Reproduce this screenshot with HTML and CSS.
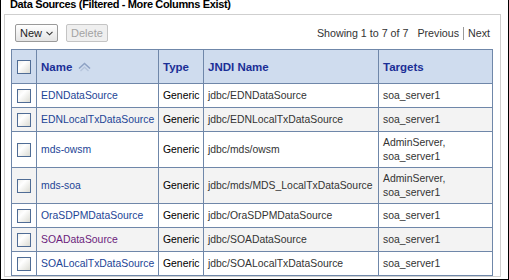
FILE: index.html
```html
<!DOCTYPE html>
<html lang="en"><head>
    <meta charset="UTF-8">
    <title>Data Sources</title>
    <link rel="stylesheet" href="styles.css">
</head>
<body>
    <div class="frame">
        <!-- Region title, scrolled slightly off the top -->
        <h2 class="title">Data Sources (Filtered - More Columns Exist)</h2>

        <div class="panel">
            <!-- Toolbar -->
            <div class="toolbar">
                <div class="actions">
                    <button class="btn">New <svg class="caret" width="7" height="5" viewBox="0 0 7 5"><polyline points="0.5,0.8 3.5,3.8 6.5,0.8" fill="none" stroke="#333" stroke-width="1.1"/></svg></button>
                    <button class="btn disabled">Delete</button>
                </div>
                <div class="pager">
                    <span>Showing 1 to 7 of 7</span>
                    <span class="prev">Previous</span>
                    <span class="sep"></span>
                    <span>Next</span>
                </div>
            </div>

            <!-- Data source table -->
            <table class="grid">
                <colgroup>
                    <col class="c-check"><col class="c-name"><col class="c-type"><col class="c-jndi"><col class="c-targets">
                </colgroup>
                <thead>
                    <tr>
                        <th class="check"><span class="box"></span></th>
                        <th>Name <svg class="sort" width="13" height="10" viewBox="0 0 13 10"><polyline points="1,6.5 6.5,1.5 12,6.5" fill="none" stroke="#8ea2c4" stroke-width="1.6"/><polyline points="2.5,9 6.5,5.3 10.5,9" fill="none" stroke="#b6c5dc" stroke-width="1.4"/></svg></th>
                        <th>Type</th>
                        <th>JNDI Name</th>
                        <th>Targets</th>
                    </tr>
                </thead>
                <tbody>
                    <tr>
                        <td class="check"><span class="box"></span></td>
                        <td><a href="#">EDNDataSource</a></td>
                        <td>Generic</td>
                        <td class="muted">jdbc/EDNDataSource</td>
                        <td class="muted">soa_server1</td>
                    </tr>
                    <tr class="alt">
                        <td class="check"><span class="box"></span></td>
                        <td><a href="#">EDNLocalTxDataSource</a></td>
                        <td>Generic</td>
                        <td class="muted">jdbc/EDNLocalTxDataSource</td>
                        <td class="muted">soa_server1</td>
                    </tr>
                    <tr class="tall">
                        <td class="check"><span class="box"></span></td>
                        <td><a href="#">mds-owsm</a></td>
                        <td>Generic</td>
                        <td class="muted">jdbc/mds/owsm</td>
                        <td class="muted">AdminServer,<br>soa_server1</td>
                    </tr>
                    <tr class="alt tall">
                        <td class="check"><span class="box"></span></td>
                        <td><a href="#">mds-soa</a></td>
                        <td>Generic</td>
                        <td class="muted">jdbc/mds/MDS_LocalTxDataSource</td>
                        <td class="muted">AdminServer,<br>soa_server1</td>
                    </tr>
                    <tr>
                        <td class="check"><span class="box"></span></td>
                        <td><a href="#">OraSDPMDataSource</a></td>
                        <td>Generic</td>
                        <td class="muted">jdbc/OraSDPMDataSource</td>
                        <td class="muted">soa_server1</td>
                    </tr>
                    <tr class="alt">
                        <td class="check"><span class="box"></span></td>
                        <td><a href="#" class="visited">SOADataSource</a></td>
                        <td>Generic</td>
                        <td class="muted">jdbc/SOADataSource</td>
                        <td class="muted">soa_server1</td>
                    </tr>
                    <tr>
                        <td class="check"><span class="box"></span></td>
                        <td><a href="#">SOALocalTxDataSource</a></td>
                        <td>Generic</td>
                        <td class="muted">jdbc/SOALocalTxDataSource</td>
                        <td class="muted">soa_server1</td>
                    </tr>
                </tbody>
            </table>
        </div>
    </div>
</body></html>
```

FILE: styles.css
```css
body {
    margin: 0;
    font-family: "Liberation Sans", Arial, sans-serif;
    font-size: 10.4px;
    color: #000;
    background: #fff;
}
.frame {
    width: 507px;
    height: 279px;
    border-left: 1px solid #000;
    border-right: 1px solid #000;
    border-bottom: 1px solid #000;
    overflow: hidden;
}
.title {
    margin: -4px 0 0 9px;
    font-size: 11px;
    letter-spacing: -0.35px;
    line-height: 16px;
    font-weight: bold;
    color: #000;
    white-space: nowrap;
}
.panel {
    margin: 2px 7px 0 3px;
    height: 261px;
    border: 1px solid #cfcfcf;
    padding: 0 7px 0 6px;
}
.toolbar {
    display: flex;
    justify-content: space-between;
    align-items: center;
    padding: 9px 3px 0 4px;
    height: 18px;
}
.actions {
    display: flex;
    gap: 8px;
}
.btn {
    font-family: inherit;
    font-size: 11px;
    height: 18px;
    padding: 0 4px;
    border: 1px solid #9a9a9a;
    border-radius: 2px;
    background: linear-gradient(#ffffff, #e4e4e4);
    color: #222;
    display: flex;
    align-items: center;
    gap: 4px;
}
.btn .caret {
    margin-top: 1px;
}
.btn.disabled {
    border-color: #c4c4c4;
    background: #efefef;
    color: #a3a3a3;
}
.pager {
    display: flex;
    align-items: center;
    color: #333;
    font-size: 10.7px;
}
.pager .prev {
    margin-left: 9px;
}
.pager .sep {
    width: 1px;
    height: 13px;
    background: #9a9a9a;
    margin: 0 4px;
}
.grid {
    margin-top: 7px;
    width: 482px;
    border-collapse: collapse;
    table-layout: fixed;
    font-size: 10.4px;
}
.c-check { width: 25px; }
.c-name { width: 122px; }
.c-type { width: 45px; }
.c-jndi { width: 175px; }
.c-targets { width: 114px; }
.grid th, .grid td {
    border: 1px solid #6f87a9;
    padding: 0 4px;
    text-align: left;
    vertical-align: middle;
    white-space: nowrap;
    overflow: hidden;
}
.grid th {
    height: 33px;
    background: #cfdcee;
    color: #1b2f96;
    font-weight: bold;
    font-size: 11.5px;
}
.grid td {
    height: 23px;
    line-height: 14px;
}
.grid tr.tall td {
    height: 35px;
}
.grid tr.alt td {
    background: #f3f3f3;
}
.grid .check {
    padding: 0;
    text-align: center;
}
.box {
    display: inline-block;
    width: 12px;
    height: 12px;
    border: 1px solid #4f6c95;
    background: linear-gradient(135deg, #f0f0ec, #ffffff 35%, #dcdcd4);
    vertical-align: middle;
}
.sort {
    vertical-align: -1px;
    margin-left: 2px;
}
.grid a {
    color: #1d4596;
    text-decoration: none;
}
.grid a.visited {
    color: #6b1d7c;
}
.muted {
    color: #333;
}
```
